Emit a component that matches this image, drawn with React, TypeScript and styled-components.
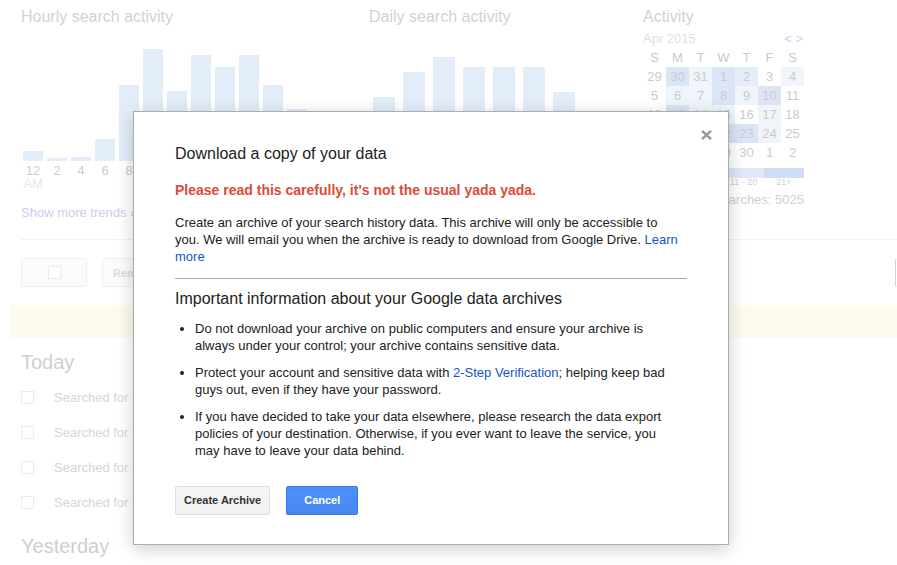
import React from "react";
import styled, { createGlobalStyle } from "styled-components";

const GlobalStyle = createGlobalStyle`
  html, body { margin: 0; padding: 0; background: #fff; overflow: hidden; }
  body { font-family: "Liberation Sans", Arial, sans-serif; }
  * { box-sizing: border-box; }
`;

const Root = styled.div`
  position: relative;
  width: 897px;
  height: 565px;
  overflow: hidden;
`;

const Page = styled.div`
  width: 1136px;
  padding: 0 21px;
`;

const Top = styled.div`
  display: flex;
  height: 239px;
  padding-top: 7px;
`;

const Section = styled.div<{ $w: number }>`
  width: ${(p) => p.$w}px;
  flex: none;
`;

const SectionTitle = styled.h2`
  margin: 0;
  font-size: 16px;
  line-height: 19px;
  font-weight: normal;
  color: #d2d2d2;
`;

const BarChart = styled.div`
  display: flex;
  align-items: flex-end;
  height: 135px;
`;

const Bar = styled.div<{ $slot: number; $bar: number }>`
  width: ${(p) => p.$bar}px;
  margin: 0 ${(p) => (p.$slot - p.$bar) / 2}px;
  background: #e3edfa;
`;

const AxisLabels = styled.div`
  display: flex;
  margin-top: 3px;
`;

const AxisLabel = styled.div<{ $slot: number }>`
  width: ${(p) => p.$slot}px;
  text-align: center;
  font-size: 13px;
  line-height: 13px;
  color: #cdcdcd;
`;

const AxisSub = styled.div`
  color: #e6e6e6;
`;

const ShowMore = styled.div`
  margin-top: 14px;
  font-size: 13px;
  line-height: 17px;
  color: #c9cdf4;
`;

const MonthRow = styled.div`
  display: flex;
  justify-content: space-between;
  margin-top: 4px;
  font-size: 13px;
  line-height: 18px;
`;

const Month = styled.span`
  color: #e0e0e0;
`;

const Nav = styled.span`
  color: #c8d1f2;
  padding-right: 1px;
`;

const CalGrid = styled.div`
  display: grid;
  grid-template-columns: repeat(7, 23px);
  grid-auto-rows: 19px;
`;

const calColors = ["transparent", "#f0f5fc", "#e5edf9", "#dbe5f7", "#d5e1f5"];

const Cell = styled.div<{ $lv: number }>`
  text-align: center;
  font-size: 13px;
  line-height: 19px;
  color: #cbcbcb;
  background: ${(p) => calColors[p.$lv]};
`;

const LegendBar = styled.div`
  display: grid;
  grid-template-columns: repeat(4, 1fr);
  margin-top: 6px;
  height: 10px;
`;

const legendColors = ["#f0f5fc", "#e8eefa", "#dfe8f8", "#cfdcf5"];

const LegendSeg = styled.div<{ $lv: number }>`
  background: ${(p) => legendColors[p.$lv]};
`;

const LegendLabels = styled.div`
  display: grid;
  grid-template-columns: repeat(4, 1fr);
  font-size: 9px;
  line-height: 9px;
  color: #d0d0d0;
  text-align: center;
`;

const Total = styled.div`
  margin-top: 4px;
  text-align: right;
  font-size: 13px;
  line-height: 17px;
  color: #cfcfcf;
`;

const Divider = styled.div`
  height: 1px;
  background: #f1f1f1;
`;

const Toolbar = styled.div`
  display: flex;
  align-items: center;
  gap: 15px;
  margin-top: 18px;
`;

const ToolButton = styled.div<{ $w?: number }>`
  height: 29px;
  ${(p) => (p.$w ? `width: ${p.$w}px;` : "")}
  display: flex;
  align-items: center;
  justify-content: center;
  padding: 0 10px;
  border: 1px solid #f0f0f0;
  border-radius: 2px;
  background: #fbfbfb;
  font-size: 11px;
  font-weight: bold;
  color: #dadada;
`;

const Check = styled.div`
  width: 13px;
  height: 13px;
  border: 1px solid #ececec;
  background: #fff;
  flex: none;
`;

const SearchField = styled.div`
  margin-left: auto;
  width: 220px;
  height: 28px;
  border: 1px solid #eee;
  border-left-color: #d2d2d2;
`;

const Banner = styled.div`
  margin: 18px 0 0 -10px;
  height: 33px;
  background: #fefbee;
`;

const DayHeading = styled.h3<{ $top: number }>`
  margin: ${(p) => p.$top}px 0 6px;
  font-size: 20px;
  line-height: 24px;
  font-weight: normal;
  color: #cfcfcf;
`;

const ResultRow = styled.div`
  display: flex;
  align-items: center;
  gap: 20px;
  height: 35px;
  font-size: 13px;
  color: #d6d6d6;
`;

const Modal = styled.div`
  position: absolute;
  left: 133px;
  top: 111px;
  width: 596px;
  padding: 30px 41px 29px;
  background: #fff;
  border: 1px solid #acacac;
  box-shadow: 0 4px 16px rgba(0, 0, 0, 0.2);
  color: #222;
`;

const CloseButton = styled.div`
  position: absolute;
  top: 18px;
  right: 16px;
  width: 11px;
  height: 10px;
  display: flex;
`;

const ModalTitle = styled.h1`
  margin: 0;
  font-size: 16px;
  line-height: 24px;
  font-weight: normal;
  color: #222;
`;

const Warning = styled.p`
  margin: 16px 0 0;
  font-size: 14px;
  line-height: 17px;
  font-weight: bold;
  color: #dd4b39;
`;

const Para = styled.p`
  margin: 15px 0 0;
  padding-right: 8px;
  font-size: 13px;
  line-height: 17px;
`;

const Link = styled.a`
  color: #15c;
  text-decoration: none;
`;

const Rule = styled.hr`
  margin: 13px 0 0;
  border: 0;
  border-top: 1px solid #aaa;
  height: 0;
`;

const SubTitle = styled.h2`
  margin: 10px 0 0;
  font-size: 16px;
  line-height: 19px;
  font-weight: normal;
  color: #222;
`;

const InfoList = styled.ul`
  margin: 12px 0 0;
  padding: 0 4px 0 20px;
  font-size: 13px;
  line-height: 17px;
  li + li { margin-top: 10px; }
`;

const ButtonRow = styled.div`
  display: flex;
  gap: 16px;
  margin-top: 27px;
`;

const Btn = styled.button<{ $primary?: boolean }>`
  height: 29px;
  min-width: 72px;
  padding: 0 8px;
  line-height: 27px;
  border-radius: 2px;
  font-family: "Liberation Sans", Arial, sans-serif;
  font-size: 11px;
  font-weight: bold;
  cursor: pointer;
  border: 1px solid ${(p) => (p.$primary ? "#3079ed" : "#dcdcdc")};
  background: ${(p) =>
    p.$primary
      ? "linear-gradient(#4d90fe, #4787ed)"
      : "linear-gradient(#f5f5f5, #f1f1f1)"};
  color: ${(p) => (p.$primary ? "#fff" : "#333")};
`;

const hourly = [10, 3, 4, 22, 76, 112, 70, 106, 94, 106, 76, 52];
const hourLabels = ["12", "2", "4", "6", "8", "10", "12", "2", "4", "6", "8", "10"];
const daily = [64, 89, 104, 94, 94, 94, 69];
const dayLabels = ["S", "M", "T", "W", "T", "F", "S"];

const weeks: [string, number][][] = [
  [["29", 0], ["30", 3], ["31", 1], ["1", 3], ["2", 2], ["3", 0], ["4", 1]],
  [["5", 0], ["6", 1], ["7", 1], ["8", 3], ["9", 1], ["10", 3], ["11", 0]],
  [["12", 0], ["13", 3], ["14", 1], ["15", 1], ["16", 0], ["17", 1], ["18", 0]],
  [["19", 1], ["20", 2], ["21", 1], ["22", 3], ["23", 3], ["24", 1], ["25", 0]],
  [["26", 0], ["27", 1], ["28", 1], ["29", 0], ["30", 0], ["1", 0], ["2", 0]],
];

export default function App() {
  return (
    <>
      <GlobalStyle />
      <Root>
        <Page>
          <Top>
            <Section $w={348}>
              <SectionTitle>Hourly search activity</SectionTitle>
              <BarChart>
                {hourly.map((h, i) => (
                  <Bar key={i} $slot={24} $bar={20} style={{ height: h }} />
                ))}
              </BarChart>
              <AxisLabels>
                {hourLabels.map((l, i) => (
                  <AxisLabel key={i} $slot={24}>
                    {l}
                    {i === 0 && <AxisSub>AM</AxisSub>}
                    {i === 6 && <AxisSub>PM</AxisSub>}
                  </AxisLabel>
                ))}
              </AxisLabels>
              <ShowMore>Show more trends »</ShowMore>
            </Section>
            <Section $w={274}>
              <SectionTitle>Daily search activity</SectionTitle>
              <BarChart>
                {daily.map((h, i) => (
                  <Bar key={i} $slot={30} $bar={22} style={{ height: h }} />
                ))}
              </BarChart>
              <AxisLabels>
                {dayLabels.map((l, i) => (
                  <AxisLabel key={i} $slot={30}>{l}</AxisLabel>
                ))}
              </AxisLabels>
            </Section>
            <Section $w={161}>
              <SectionTitle>Activity</SectionTitle>
              <MonthRow>
                <Month>Apr 2015</Month>
                <Nav>&lt; &gt;</Nav>
              </MonthRow>
              <CalGrid>
                {dayLabels.map((d, i) => (
                  <Cell key={"h" + i} $lv={0}>{d}</Cell>
                ))}
                {weeks.flat().map(([d, lv], i) => (
                  <Cell key={i} $lv={lv}>{d}</Cell>
                ))}
              </CalGrid>
              <LegendBar>
                {[0, 1, 2, 3].map((lv) => (
                  <LegendSeg key={lv} $lv={lv} />
                ))}
              </LegendBar>
              <LegendLabels>
                <span>0</span>
                <span>1 - 10</span>
                <span>11 - 20</span>
                <span>21+</span>
              </LegendLabels>
              <Total>Total searches: 5025</Total>
            </Section>
          </Top>
          <Divider />
          <Toolbar>
            <ToolButton $w={66}>
              <Check />
            </ToolButton>
            <ToolButton>Remove items</ToolButton>
            <SearchField />
          </Toolbar>
          <Banner />
          <DayHeading $top={12}>Today</DayHeading>
          {[0, 1, 2, 3].map((i) => (
            <ResultRow key={i}>
              <Check />
              <span>Searched for</span>
            </ResultRow>
          ))}
          <DayHeading $top={14}>Yesterday</DayHeading>
        </Page>

        <Modal>
          <CloseButton>
            <svg width="11" height="10" viewBox="0 0 11 10">
              <path d="M1 0.8 L10 9.2 M10 0.8 L1 9.2" stroke="#999" strokeWidth="2.4" fill="none" />
            </svg>
          </CloseButton>
          <ModalTitle>Download a copy of your data</ModalTitle>
          <Warning>Please read this carefully, it's not the usual yada yada.</Warning>
          <Para>
            Create an archive of your search history data. This archive will only be accessible to
            you. We will email you when the archive is ready to download from Google Drive.{" "}
            <Link href="#">Learn more</Link>
          </Para>
          <Rule />
          <SubTitle>Important information about your Google data archives</SubTitle>
          <InfoList>
            <li>
              Do not download your archive on public computers and ensure your archive is always
              under your control; your archive contains sensitive data.
            </li>
            <li>
              Protect your account and sensitive data with <Link href="#">2-Step Verification</Link>;
              helping keep bad guys out, even if they have your password.
            </li>
            <li>
              If you have decided to take your data elsewhere, please research the data export
              policies of your destination. Otherwise, if you ever want to leave the service, you
              may have to leave your data behind.
            </li>
          </InfoList>
          <ButtonRow>
            <Btn>Create Archive</Btn>
            <Btn $primary>Cancel</Btn>
          </ButtonRow>
        </Modal>
      </Root>
    </>
  );
}
